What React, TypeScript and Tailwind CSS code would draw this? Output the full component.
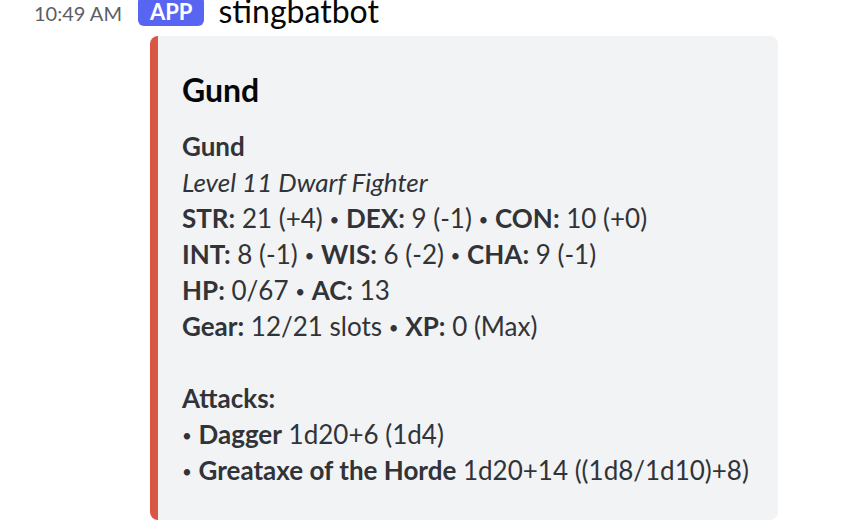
const font = { fontFamily: "Lato, 'Liberation Sans', sans-serif" };

const B = ({ children }: { children: React.ReactNode }) => (
  <span className="font-bold">{children}</span>
);

// small round bullet, like the reference's separator glyph
const Dot = () => <span className="text-[17px] leading-none align-[2px]">•</span>;

export default function App() {
  return (
    <div
      className="w-[856px] h-[532px] overflow-hidden bg-white"
      style={font}
    >
      <div className="-mt-[6px] flex items-start pl-[34px]">
        <span className="text-[20px] leading-[38px] text-[#5c5e66]">10:49 AM</span>
        <span className="ml-[16px] mt-[2px] h-[30px] rounded-[6px] bg-[#5865f2] px-[12px] pt-[2px] text-[22px] font-bold leading-[28px] text-white">
          APP
        </span>
        <span className="ml-[14px] mt-[2px] text-[32px] leading-[29px] text-[#060607]">
          stingbatbot
        </span>
      </div>

      <div className="ml-[150px] mt-[4px] w-[628px] rounded-[8px] border-l-[8px] border-[#d95642] bg-[#f2f3f5] pb-[32px] pl-[24px] pr-[16px] pt-[16px]">
        <div className="mt-[16px] text-[32px] font-bold leading-[44px] text-[#060607]">
          Gund
        </div>
        <div className="mt-[16px] whitespace-nowrap text-[26px] leading-[36px] text-[#313338]">
          <div className="font-bold">Gund</div>
          <div className="italic">Level 11 Dwarf Fighter</div>
          <div>
            <B>STR:</B> 21 (+4) <Dot /> <B>DEX:</B> 9 (-1) <Dot /> <B>CON:</B> 10 (+0)
          </div>
          <div>
            <B>INT:</B> 8 (-1) <Dot /> <B>WIS:</B> 6 (-2) <Dot /> <B>CHA:</B> 9 (-1)
          </div>
          <div>
            <B>HP:</B> 0/67 <Dot /> <B>AC:</B> 13
          </div>
          <div>
            <B>Gear:</B> 12/21 slots <Dot /> <B>XP:</B> 0 (Max)
          </div>
          <div className="h-[36px]" />
          <div className="font-bold">Attacks:</div>
          <div>
            <Dot /> <B>Dagger</B> 1d20+6 (1d4)
          </div>
          <div>
            <Dot /> <B>Greataxe of the Horde</B> 1d20+14 ((1d8/1d10)+8)
          </div>
        </div>
      </div>
    </div>
  );
}
